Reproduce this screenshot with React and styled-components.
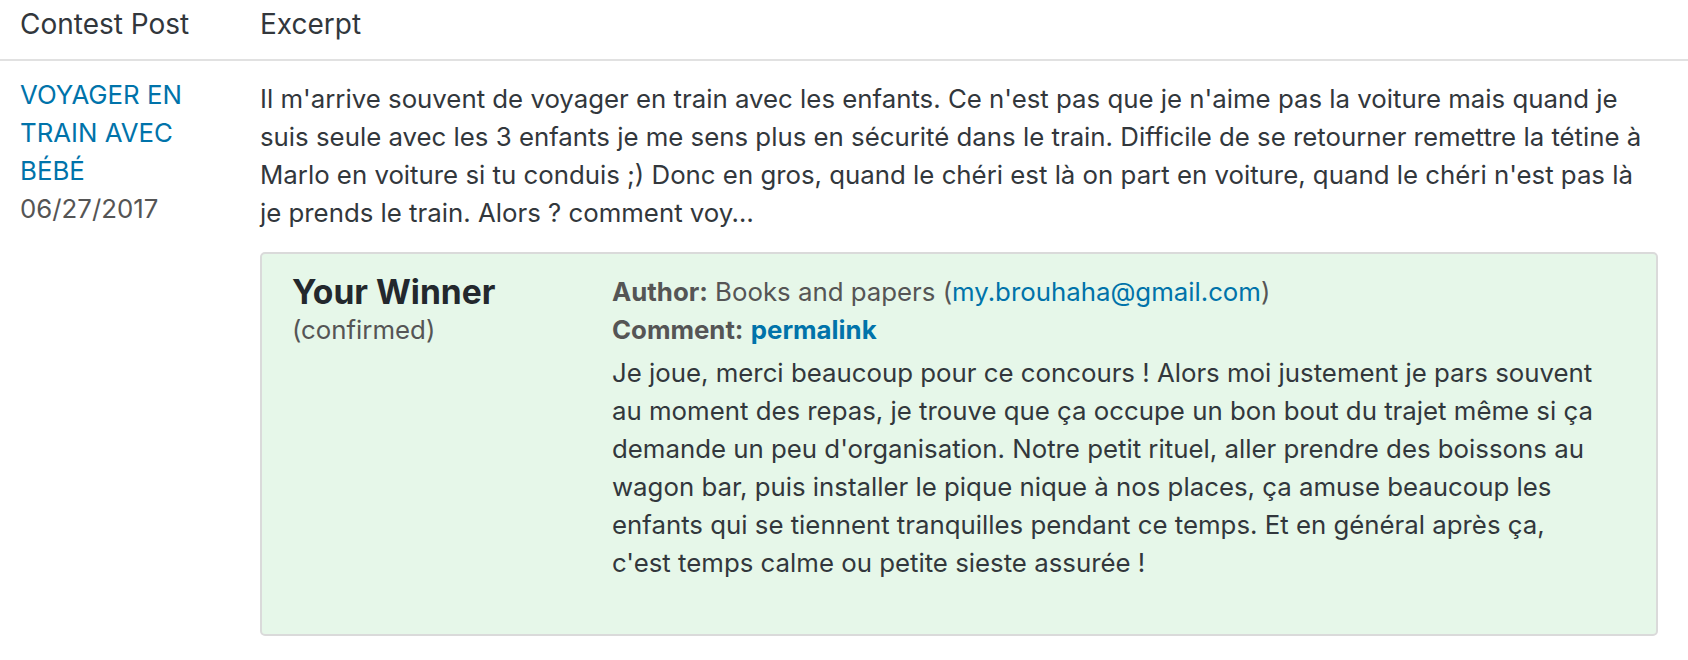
import React from "react";
import styled, { createGlobalStyle } from "styled-components";

const GlobalStyle = createGlobalStyle`
  body {
    margin: 0;
    background: #fff;
    font-family: Inter, "Noto Sans", sans-serif;
    color: #32373c;
  }
`;

const Table = styled.div`
  width: 100%;
`;

const Row = styled.div`
  display: grid;
  grid-template-columns: 240px 1fr;
`;

const HeadRow = styled(Row)`
  border-bottom: 2px solid #e1e1e1;
`;

const HeadCell = styled.div`
  padding: 5px 20px 16px;
  font-size: 28px;
  line-height: 38px;
  color: #32373c;
`;

const Cell = styled.div`
  padding: ${(p) => (p.$title ? "15px 20px 0" : "19px 30px 24px 20px")};
  font-size: 25.8px;
  line-height: 38px;
`;

const PostLink = styled.a`
  display: block;
  color: #0073aa;
  text-decoration: none;
  text-transform: uppercase;
`;

const PostDate = styled.span`
  display: block;
  color: #555;
`;

const Excerpt = styled.p`
  margin: 0;
  color: #32373c;
`;

const WinnerBox = styled.div`
  display: grid;
  grid-template-columns: 320px 1fr;
  margin-top: 20px;
  padding: 19px 50px 52px 30px;
  background: #e6f7e9;
  border: 2px solid #dadada;
  border-radius: 5px;
`;

const WinnerTitle = styled.h3`
  margin: 0;
  font-size: 33.6px;
  line-height: 38px;
  font-weight: 700;
  color: #23282d;
`;

const Muted = styled.div`
  color: #555;
`;

const Meta = styled.div`
  color: #555;
`;

const Label = styled.strong`
  font-weight: 700;
  color: #555;
`;

const Link = styled.a`
  color: #0073aa;
  text-decoration: none;
  font-weight: ${(p) => (p.$bold ? 700 : 400)};
`;

const CommentText = styled.p`
  margin: 5px 0 0;
  color: #32373c;
`;

export default function App() {
  return (
    <>
      <GlobalStyle />
      <Table>
        <HeadRow>
          <HeadCell>Contest Post</HeadCell>
          <HeadCell>Excerpt</HeadCell>
        </HeadRow>
        <Row>
          <Cell $title>
            <PostLink href="#">Voyager en train avec bébé</PostLink>
            <PostDate>06/27/2017</PostDate>
          </Cell>
          <Cell>
            <Excerpt>
              Il m'arrive souvent de voyager en train avec les enfants. Ce n'est pas que je n'aime pas la
              voiture mais quand je suis seule avec les 3 enfants je me sens plus en sécurité dans le train.
              Difficile de se retourner remettre la tétine à Marlo en voiture si tu conduis ;) Donc en gros,
              quand le chéri est là on part en voiture, quand le chéri n'est pas là je prends le train. Alors
              ? comment voy…
            </Excerpt>
            <WinnerBox>
              <div>
                <WinnerTitle>Your Winner</WinnerTitle>
                <Muted>(confirmed)</Muted>
              </div>
              <div>
                <Meta>
                  <Label>Author:</Label> Books and papers (
                  <Link href="#">my.brouhaha@gmail.com</Link>)
                </Meta>
                <Meta>
                  <Label>Comment:</Label> <Link href="#" $bold>permalink</Link>
                </Meta>
                <CommentText>
                  Je joue, merci beaucoup pour ce concours ! Alors moi justement je pars souvent au moment des
                  repas, je trouve que ça occupe un bon bout du trajet même si ça demande un peu
                  d'organisation. Notre petit rituel, aller prendre des boissons au wagon bar, puis installer
                  le pique nique à nos places, ça amuse beaucoup les enfants qui se tiennent tranquilles
                  pendant ce temps. Et en général après ça, c'est temps calme ou petite sieste assurée !
                </CommentText>
              </div>
            </WinnerBox>
          </Cell>
        </Row>
      </Table>
    </>
  );
}
